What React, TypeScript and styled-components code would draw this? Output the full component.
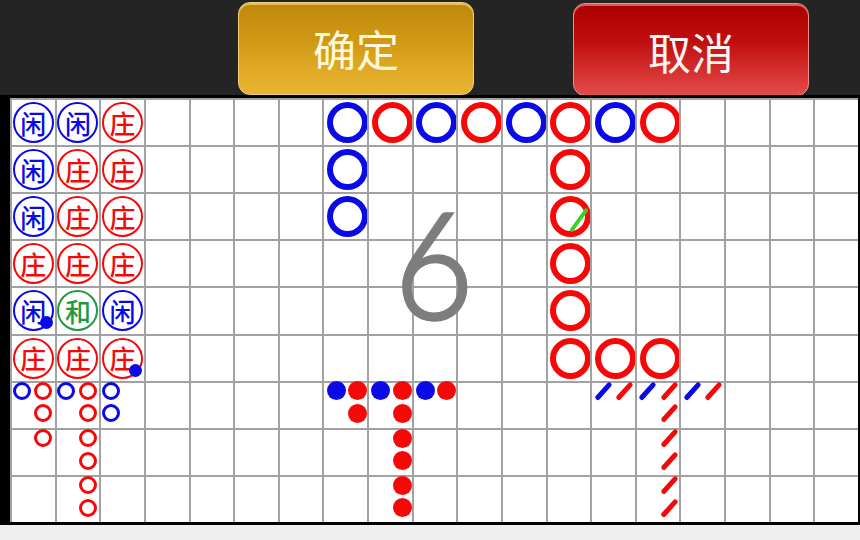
import React from 'react';
import styled, { createGlobalStyle } from 'styled-components';

const BLUE = '#0a0ae6';
const RED = '#f60808';
const GREEN = '#1f9a3c';

const GlobalStyle = createGlobalStyle`
  html, body { margin: 0; padding: 0; background: #efefef; }
  body { font-family: "Noto Sans CJK SC", "Noto Sans", sans-serif; }
  #root { width: 860px; height: 540px; }
`;

const Page = styled.div`
  width: 860px;
  height: 540px;
  display: flex;
  flex-direction: column;
  background: #efefef;
  overflow: hidden;
`;

const TopBar = styled.div`
  height: 95px;
  flex-shrink: 0;
  box-sizing: border-box;
  background: #242424;
  display: flex;
  align-items: flex-start;
  padding: 2px 0 0 238px;
  gap: 99px;
`;

const ActionButton = styled.button<{ $variant: 'ok' | 'cancel' }>`
  width: 236px;
  height: 93px;
  margin-top: ${(p) => (p.$variant === 'cancel' ? '1px' : '0')};
  padding: ${(p) => (p.$variant === 'cancel' ? '4px 0 0' : '0')};
  box-sizing: border-box;
  border-radius: 12px;
  border: 1.5px solid ${(p) => (p.$variant === 'ok' ? '#f1cf78' : '#f08c8c')};
  background: ${(p) =>
    p.$variant === 'ok'
      ? 'linear-gradient(180deg, #bf880a 0%, #cf9814 40%, #e3ad2a 80%, #e8b431 100%)'
      : 'linear-gradient(180deg, #aa0000 0%, #bf0d0d 40%, #d93636 80%, #e24c4c 100%)'};
  box-shadow: inset 0 2px 0 ${(p) => (p.$variant === 'ok' ? 'rgba(255,235,170,0.55)' : 'rgba(255,190,190,0.5)')};
  color: ${(p) => (p.$variant === 'ok' ? '#fff8da' : '#fff4f4')};
  font-family: "Noto Sans CJK SC", "Noto Sans", sans-serif;
  font-size: 43px;
  font-weight: 400;
  line-height: 1;
  display: flex;
  align-items: center;
  justify-content: center;
  cursor: pointer;
`;

const Board = styled.div`
  position: relative;
  flex-shrink: 0;
  width: 848px;
  height: 424px;
  border-style: solid;
  border-color: #000;
  border-width: 3px 2px 3px 10px;
  background: #fff;
  display: grid;
  grid-template-columns: repeat(19, 1fr);
  grid-template-rows: repeat(9, 1fr);
`;

const Cell = styled.div`
  position: relative;
  box-sizing: border-box;
  min-width: 0;
  min-height: 0;
  border-left: 2px solid #a2a2a2;
  border-top: 2px solid #a2a2a2;
  display: flex;
  align-items: center;
  justify-content: center;
`;

const Bead = styled.div<{ $color: string }>`
  position: relative;
  flex-shrink: 0;
  width: 41px;
  height: 41px;
  box-sizing: border-box;
  border-radius: 50%;
  border: 2.5px solid ${(p) => p.$color};
  color: ${(p) => p.$color};
  font-family: "Noto Sans CJK SC", sans-serif;
  font-size: 26px;
  font-weight: 500;
  line-height: 1;
  display: flex;
  align-items: center;
  justify-content: center;
`;

const PairDot = styled.span<{ $color: string }>`
  position: absolute;
  right: -1px;
  bottom: 0px;
  width: 13px;
  height: 13px;
  border-radius: 50%;
  background: ${(p) => p.$color};
`;

const BigRing = styled.div<{ $color: string }>`
  position: relative;
  flex-shrink: 0;
  width: 41px;
  height: 41px;
  box-sizing: border-box;
  border-radius: 50%;
  border: 6.5px solid ${(p) => p.$color};
  transform: translateX(2px);
`;

const TieSlash = styled.span`
  position: absolute;
  left: 21px;
  top: 4px;
  width: 3.5px;
  height: 28px;
  border-radius: 2px;
  background: #3ccf2a;
  transform: rotate(36deg);
`;

const SubGrid = styled.div`
  align-self: stretch;
  flex: 1;
  display: grid;
  grid-template-columns: 1fr 1fr;
  grid-template-rows: 1fr 1fr;
`;

const SubCell = styled.div`
  display: flex;
  align-items: center;
  justify-content: center;
  min-width: 0;
  min-height: 0;
`;

const HollowMark = styled.span<{ $color: string }>`
  width: 18px;
  height: 18px;
  box-sizing: border-box;
  border-radius: 50%;
  border: 3px solid ${(p) => p.$color};
  transform: translate(-1px, -3px);
`;

const DotMark = styled.span<{ $color: string }>`
  width: 19px;
  height: 19px;
  border-radius: 50%;
  background: ${(p) => p.$color};
  transform: translate(1px, -3px);
`;

const SlashMark = styled.span<{ $color: string }>`
  width: 4.5px;
  height: 22px;
  border-radius: 3px;
  background: ${(p) => p.$color};
  transform: translate(0px, -3px) rotate(42deg);
`;

const BigNumber = styled.div`
  position: absolute;
  left: 0;
  right: 0;
  top: 89px;
  text-align: center;
  font-family: Lato, "Noto Sans", sans-serif;
  font-weight: 300;
  font-size: 148px;
  line-height: 150px;
  color: #7d7d7d;
  -webkit-text-stroke: 3.5px #7d7d7d;
  transform: scaleX(0.92);
  pointer-events: none;
`;

type Side = 'B' | 'R' | 'G';
const colorOf = (s: Side) => (s === 'B' ? BLUE : s === 'R' ? RED : GREEN);

// bead plate, column-major
const beadCols: { t: string; s: Side; pair?: boolean }[][] = [
  [
    { t: '闲', s: 'B' },
    { t: '闲', s: 'B' },
    { t: '闲', s: 'B' },
    { t: '庄', s: 'R' },
    { t: '闲', s: 'B', pair: true },
    { t: '庄', s: 'R' },
  ],
  [
    { t: '闲', s: 'B' },
    { t: '庄', s: 'R' },
    { t: '庄', s: 'R' },
    { t: '庄', s: 'R' },
    { t: '和', s: 'G' },
    { t: '庄', s: 'R' },
  ],
  [
    { t: '庄', s: 'R' },
    { t: '庄', s: 'R' },
    { t: '庄', s: 'R' },
    { t: '庄', s: 'R' },
    { t: '闲', s: 'B' },
    { t: '庄', s: 'R', pair: true },
  ],
];

// big road: key "col,row"
const bigRoad: Record<string, { s: Side; tie?: boolean }> = {};
['B', 'R', 'B', 'R', 'B', 'R', 'B', 'R'].forEach((s, i) => {
  bigRoad[`${7 + i},0`] = { s: s as Side };
});
bigRoad['7,1'] = { s: 'B' };
bigRoad['7,2'] = { s: 'B' };
for (let r = 1; r <= 5; r++) bigRoad[`12,${r}`] = { s: 'R', tie: r === 2 };
bigRoad['13,5'] = { s: 'R' };
bigRoad['14,5'] = { s: 'R' };

// derived roads: key "subcol,subrow"
type Kind = 'hollow' | 'dot' | 'slash';
const small: Record<string, { s: Side; k: Kind }> = {};
const addRoad = (start: number, k: Kind, cols: [Side, number][]) => {
  cols.forEach(([s, n], i) => {
    for (let r = 0; r < n; r++) small[`${start + i},${r}`] = { s, k };
  });
};
addRoad(0, 'hollow', [['B', 1], ['R', 3], ['B', 1], ['R', 6], ['B', 2]]);
addRoad(14, 'dot', [['B', 1], ['R', 2], ['B', 1], ['R', 6], ['B', 1], ['R', 1]]);
addRoad(26, 'slash', [['B', 1], ['R', 1], ['B', 1], ['R', 6], ['B', 1], ['R', 1]]);

const SmallMark: React.FC<{ s: Side; k: Kind }> = ({ s, k }) => {
  const c = colorOf(s);
  if (k === 'hollow') return <HollowMark $color={c} />;
  if (k === 'dot') return <DotMark $color={c} />;
  return <SlashMark $color={c} />;
};

export default function App() {
  const cells: React.ReactNode[] = [];
  for (let r = 0; r < 9; r++) {
    for (let c = 0; c < 19; c++) {
      let content: React.ReactNode = null;
      if (r < 6) {
        if (c < 3) {
          const b = beadCols[c][r];
          content = (
            <Bead $color={colorOf(b.s)}>
              {b.t}
              {b.pair && <PairDot $color={BLUE} />}
            </Bead>
          );
        } else {
          const m = bigRoad[`${c},${r}`];
          if (m)
            content = (
              <BigRing $color={colorOf(m.s)}>{m.tie && <TieSlash />}</BigRing>
            );
        }
      } else {
        const subs: React.ReactNode[] = [];
        for (let dy = 0; dy < 2; dy++) {
          for (let dx = 0; dx < 2; dx++) {
            const m = small[`${c * 2 + dx},${(r - 6) * 2 + dy}`];
            subs.push(<SubCell key={`${dx}-${dy}`}>{m && <SmallMark s={m.s} k={m.k} />}</SubCell>);
          }
        }
        content = <SubGrid>{subs}</SubGrid>;
      }
      cells.push(<Cell key={`${r}-${c}`}>{content}</Cell>);
    }
  }

  return (
    <Page>
      <GlobalStyle />
      <TopBar>
        <ActionButton $variant="ok">确定</ActionButton>
        <ActionButton $variant="cancel">取消</ActionButton>
      </TopBar>
      <Board>
        {cells}
        <BigNumber>6</BigNumber>
      </Board>
    </Page>
  );
}
